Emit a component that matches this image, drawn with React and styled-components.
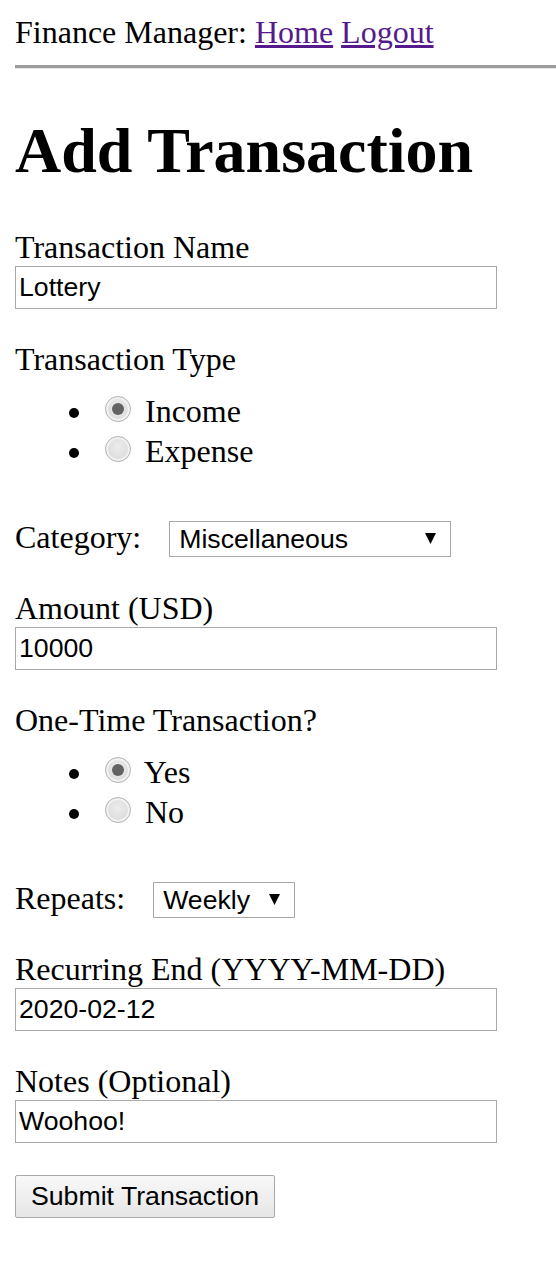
import React from 'react';
import styled, { createGlobalStyle } from 'styled-components';

const GlobalStyle = createGlobalStyle`
    html, body {
        background: #ffffff;
    }
    body {
        margin: 14px 0 16px 15px;
        font-family: "Liberation Serif", "Times New Roman", serif;
        font-size: 32px;
        color: #000000;
    }
`;

const Nav = styled.div`
    line-height: normal;
`;

const NavLink = styled.a`
    color: #551a8b;
    text-decoration: underline;
`;

const Rule = styled.hr`
    margin: 14px 0 0 0;
    height: 0;
    border: none;
    border-top: 3px solid #9c9c9c;
    border-bottom: 1px solid #e6e6e6;
`;

const Title = styled.h1`
    font-size: 64px;
    font-weight: bold;
    margin: 45px 0 41px 0;
`;

const Field = styled.div`
    margin-bottom: ${props => props.gap || 32}px;
`;

const Label = styled.label`
    display: block;
`;

const InlineLabel = styled.label`
    display: inline-block;
    margin-right: 28px;
`;

const TextInput = styled.input`
    display: block;
    box-sizing: border-box;
    width: 482px;
    height: 43px;
    margin: 0;
    padding: 0 3px;
    border: 1px solid #a9a9a9;
    font-family: "Liberation Sans", Arial, sans-serif;
    font-size: 26.67px;
    color: #000000;
    background: #ffffff;
    outline: none;
`;

const RadioList = styled.ul`
    margin: 12px 0 0 0;
    padding-left: 80px;
    list-style: disc;
`;

const RadioItem = styled.li`
    line-height: normal;
`;

const Radio = styled.input.attrs({ type: 'radio' })`
    appearance: none;
    -webkit-appearance: none;
    box-sizing: border-box;
    width: 26px;
    height: 26px;
    margin: 6px 6px 0 10px;
    border-radius: 50%;
    border: 1px solid #b4b4b4;
    background: radial-gradient(circle at 50% 40%, #ececec 0%, #dcdcdc 70%, #d2d2d2 100%);
    box-shadow: inset 0 0 0 2px #f2f2f2;
    position: relative;
    vertical-align: baseline;

    &:checked::after {
        content: '';
        position: absolute;
        left: 50%;
        top: 50%;
        width: 12px;
        height: 12px;
        margin: -6px 0 0 -6px;
        border-radius: 50%;
        background: #626262;
    }
`;

const SelectWrap = styled.span`
    display: inline-block;
    position: relative;
    vertical-align: baseline;
`;

const Select = styled.select`
    appearance: none;
    -webkit-appearance: none;
    box-sizing: border-box;
    width: ${props => props.width}px;
    height: 36px;
    margin: 0;
    padding: 0 30px 0 9px;
    border: 1px solid #a9a9a9;
    border-radius: 0;
    background: #ffffff;
    font-family: "Liberation Sans", Arial, sans-serif;
    font-size: 26.67px;
    color: #000000;
    outline: none;
`;

const Arrow = styled.svg`
    position: absolute;
    right: 15px;
    top: 14px;
    pointer-events: none;
`;

const SubmitButton = styled.button`
    box-sizing: border-box;
    height: 43px;
    margin: 0;
    padding: 0 15px;
    border: 1px solid #a9a9a9;
    border-radius: 2px;
    background: linear-gradient(#f8f8f8, #e6e6e6);
    font-family: "Liberation Sans", Arial, sans-serif;
    font-size: 26.67px;
    color: #000000;
`;

const Dropdown = ({ width, value, options }) => (
    <SelectWrap>
        <Select width={width} defaultValue={value}>
            {options.map(o => <option key={o}>{o}</option>)}
        </Select>
        <Arrow width="11" height="11" viewBox="0 0 11 11">
            <path d="M0 0 L11 0 L5.5 11 Z" fill="#000" />
        </Arrow>
    </SelectWrap>
);

const RadioGroup = ({ name, options, checked }) => (
    <RadioList>
        {options.map(o => (
            <RadioItem key={o}>
                <Radio name={name} defaultChecked={o === checked} />
                {' '}{o}
            </RadioItem>
        ))}
    </RadioList>
);

export default function App() {
    return (
        <>
            <GlobalStyle />
            <Nav>
                Finance Manager: <NavLink href="#">Home</NavLink> <NavLink href="#">Logout</NavLink>
            </Nav>
            <Rule />
            <Title>Add Transaction</Title>
            <form onSubmit={e => e.preventDefault()}>
                <Field>
                    <Label>Transaction Name</Label>
                    <TextInput defaultValue="Lottery" />
                </Field>
                <Field gap={49}>
                    <Label>Transaction Type</Label>
                    <RadioGroup name="type" options={['Income', 'Expense']} checked="Income" />
                </Field>
                <Field gap={33}>
                    <InlineLabel>Category:</InlineLabel>
                    <Dropdown
                        width={282}
                        value="Miscellaneous"
                        options={['Salary', 'Food', 'Rent', 'Miscellaneous']}
                    />
                </Field>
                <Field>
                    <Label>Amount (USD)</Label>
                    <TextInput defaultValue="10000" />
                </Field>
                <Field gap={49}>
                    <Label>One-Time Transaction?</Label>
                    <RadioGroup name="once" options={['Yes', 'No']} checked="Yes" />
                </Field>
                <Field gap={33}>
                    <InlineLabel>Repeats:</InlineLabel>
                    <Dropdown width={142} value="Weekly" options={['Daily', 'Weekly', 'Monthly']} />
                </Field>
                <Field>
                    <Label>Recurring End (YYYY-MM-DD)</Label>
                    <TextInput defaultValue="2020-02-12" />
                </Field>
                <Field>
                    <Label>Notes (Optional)</Label>
                    <TextInput defaultValue="Woohoo!" />
                </Field>
                <SubmitButton type="submit">Submit Transaction</SubmitButton>
            </form>
        </>
    );
}
